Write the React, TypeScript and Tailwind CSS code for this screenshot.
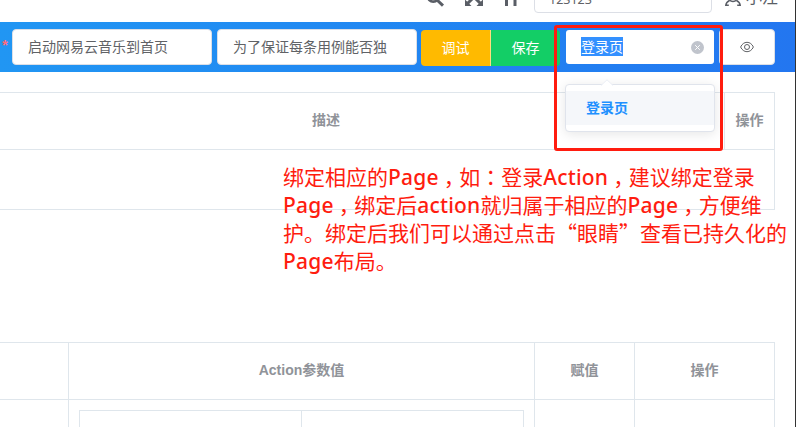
import React from "react";

const ui = "font-['Liberation_Sans','Noto_Sans_CJK_SC',sans-serif]";

function Comma() {
  return <span className="mx-[5px] [font-feature-settings:'halt']">，</span>;
}

function Quote({ children }: { children: React.ReactNode }) {
  return <span className="font-['Noto_Sans_CJK_SC',sans-serif]">{children}</span>;
}

function Latin({ children }: { children: React.ReactNode }) {
  return <span className="font-['Noto_Sans',sans-serif] font-medium tracking-[0.2px]">{children}</span>;
}

function TopBar() {
  return (
    <header className="relative h-[22px] overflow-hidden text-[#5a5e66]">
      <svg className="absolute left-[426px] -top-[11px]" width="18" height="18" viewBox="0 0 18 18" fill="none" stroke="currentColor">
        <circle cx="7.3" cy="7" r="5.6" strokeWidth="2.6" />
        <path d="M11.5 11.5 L17 16.6" strokeWidth="3" />
      </svg>
      <svg className="absolute left-[465px] -top-[12px]" width="18" height="18" viewBox="0 0 18 18" fill="currentColor">
        <path d="M0 0h6L0 6zM18 0h-6l6 6zM0 18h6.5l-6.5-6.5zM18 18h-6.5l6.5-6.5z" />
        <path d="M2 2l14 14M16 2L2 16" stroke="currentColor" strokeWidth="3" />
      </svg>
      <svg className="absolute left-[503px] -top-[12px]" width="16" height="18" viewBox="0 0 16 18" fill="none" stroke="currentColor">
        <path d="M3.5 18V4M12 18V4M1 5h14" strokeWidth="3" />
      </svg>
      <div className="absolute left-[534px] -top-[19px] flex h-8 w-[178px] items-center justify-between rounded border border-[#dcdfe6] bg-white pl-[14px] pr-2 text-[13px] text-[#606266]">
        <span className="relative top-[3px] font-['Noto_Sans',sans-serif] text-[12.500px]">123123</span>
        <svg className="relative top-[2px] text-[#c0c4cc]" width="14" height="14" viewBox="0 0 14 14" fill="none" stroke="currentColor">
          <path d="M3 4l4 4 4-4" />
        </svg>
      </div>
      <svg className="absolute left-[725px] -top-[11px]" width="16" height="17" viewBox="0 0 16 17" fill="none" stroke="currentColor" strokeWidth="1.5">
        <circle cx="8" cy="7.5" r="5" />
        <path d="M4.5 11.5C2.5 12.5 1 14 .8 16.3h3M11.500 11.500c2 1 3.500 2.500 3.700 4.800h-3" />
      </svg>
      <span className="absolute left-[746px] -top-[13px] text-[16px] leading-[22px]">小汪</span>
    </header>
  );
}

function Field({ children }: { children: React.ReactNode }) {
  return (
    <div className="mr-[5px] flex h-9 w-[200px] shrink-0 items-center rounded border border-[#dcdfe6] bg-white pl-[15px] text-[#606266]">
      {children}
    </div>
  );
}

function Toolbar() {
  return (
    <div className="flex h-[50px] items-start bg-linear-to-r from-[#2196f3] to-[#2376f0] pt-[7px] text-[14px] leading-5">
      <span className="w-3 pl-[2px] pt-[6px] text-[15px] font-bold text-[#ff6c7c]">*</span>
      <Field>启动网易云音乐到首页</Field>
      <Field>为了保证每条用例能否独</Field>
      <button className="-ml-px mt-px h-9 w-[70px] rounded-l border-r border-white/50 bg-[#ffba00] text-white">调试</button>
      <button className="mt-px h-9 w-[69px] rounded-r bg-[#13ce66] text-white">保存</button>
      <div className="ml-[6px] mt-px flex h-[34px] w-[148px] items-center justify-between rounded-[3px] bg-white pl-[15px] pr-[10px]">
        <span className="-mt-px h-[19px] bg-[#3390ff] leading-[20px] text-white">登录页</span>
        <svg width="13" height="13" viewBox="0 0 13 13" fill="none">
          <circle cx="6.500" cy="6.500" r="6.500" fill="#c0c4cc" />
          <path d="M4.200 4.200l4.600 4.600M8.800 4.200L4.200 8.800" stroke="white" />
        </svg>
      </div>
      <button className="ml-[5px] flex h-9 w-14 items-center justify-center rounded border border-[#dcdfe6] bg-white text-[#606266]">
        <svg width="14" height="12" viewBox="0 0 14 12" fill="none" stroke="currentColor">
          <path d="M.6 6C2 3 4.300 1.300 7 1.300S12 3 13.400 6C12 9 9.700 10.700 7 10.700S2 9 .6 6z" />
          <circle cx="7" cy="6" r="2.500" />
        </svg>
      </button>
    </div>
  );
}

function PageMenu() {
  return (
    <div className="absolute left-[565px] top-[84px] h-12 w-[150px] rounded border border-[#e0e4ec] bg-white py-[6px] shadow-[0_2px_12px_rgba(0,0,0,0.1)]">
      <svg className="absolute -top-[6px] left-[35px]" width="12" height="7" viewBox="0 0 12 7" fill="white">
        <path d="M0 6.500L6 .8l6 5.700" stroke="#ebeef5" />
      </svg>
      <div className="flex h-[34px] items-center bg-[#f5f7fa] pl-5 text-[14px] font-bold text-[#2090ff]">登录页</div>
    </div>
  );
}

export default function App() {
  return (
    <div className={`relative h-[427px] w-[796px] overflow-hidden bg-white ${ui}`}>
      <TopBar />
      <Toolbar />

      <section className="mt-5 w-[775px] border-y border-r border-[#dfe6ec] text-[14px] font-bold text-[#909399]">
        <div className="flex h-[57px] border-b border-[#dfe6ec]">
          <div className="-ml-[72px] flex w-[797px] shrink-0 items-center justify-center border-r border-[#dfe6ec] pb-px">描述</div>
          <div className="flex w-[49px] items-center justify-center pb-px">操作</div>
        </div>
        <div className="h-[59px]" />
      </section>

      <section className="mt-[132px] grid w-[775px] grid-cols-[69px_466px_100px_140px] border-t border-[#dfe6ec] text-[14px] font-bold text-[#909399]">
        {["", "Action参数值", "赋值", "操作"].map((label, i) => (
          <div key={i} className="flex h-[57px] items-center justify-center border-b border-r border-[#dfe6ec] pb-px">{label}</div>
        ))}
        <div className="h-[27px] border-r border-[#dfe6ec]" />
        <div className="h-[27px] border-r border-[#dfe6ec] px-[10px] pt-[10px]">
          <div className="flex h-[17px] border-x border-t border-[#dfe6ec]">
            <div className="w-[222px] border-r border-[#dfe6ec]" />
          </div>
        </div>
        <div className="h-[27px] border-r border-[#dfe6ec]" />
        <div className="h-[27px] border-r border-[#dfe6ec]" />
      </section>

      <PageMenu />
      <div className="absolute left-[554px] top-[25px] h-[126px] w-[169px] rounded-[3px] border-[3px] border-[#ff1c0f]" />
      <div className="absolute left-[283px] top-[162px] whitespace-nowrap font-['Noto_Sans_CJK_SC',sans-serif] text-[21px] leading-[28px] text-[#ff1c0f]">
        <p className="h-7">绑定相应的<Latin>Page</Latin><Comma />如<span className="font-['Noto_Sans_CJK_TC',sans-serif]" lang="zh-TW">：</span>登录<Latin>Action</Latin><Comma />建议绑定登录</p>
        <p className="h-7"><Latin>Page</Latin><Comma />绑定后<Latin>action</Latin>就归属于相应的<Latin>Page</Latin><Comma />方便维</p>
        <p className="h-7">护。绑定后我们可以通过点击<Quote>“</Quote>眼睛<Quote>”</Quote>查看已持久化的</p>
        <p className="h-7"><Latin>Page</Latin>布局。</p>
      </div>
      <div className="absolute right-0 top-0 h-full w-px bg-[#333]" />
    </div>
  );
}
